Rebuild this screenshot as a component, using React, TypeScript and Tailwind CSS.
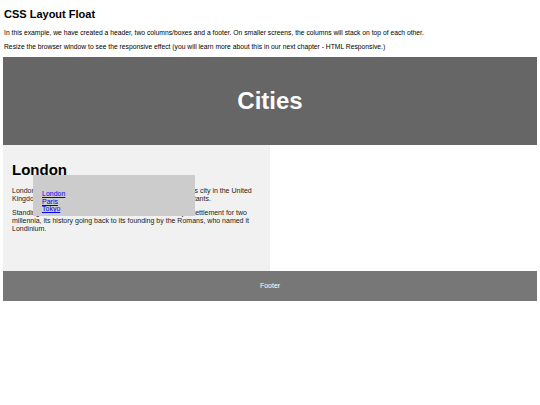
import React from 'react';

const cities = ['London', 'Paris', 'Tokyo'];

const App: React.FC = () => {
  return (
    <div className="min-h-[405px] bg-white px-[3px] font-['Liberation_Sans',Arial,sans-serif] text-black">
      <h2 className="pl-[1px] pt-[7px] text-[11px] leading-[14px] font-bold">CSS Layout Float</h2>
      <p className="mt-[7px] pl-[1px] text-[6.75px] leading-[9px]">
        In this example, we have created a header, two columns/boxes and a footer. On smaller screens, the columns will stack on top of each other.
      </p>
      <p className="mt-[5px] pl-[1px] text-[6.75px] leading-[9px]">
        Resize the browser window to see the responsive effect (you will learn more about this in our next chapter - HTML Responsive.)
      </p>

      <header className="mt-[6px] flex h-[88px] items-center justify-center bg-[#666666]">
        <h2 className="text-[24px] font-bold text-white">Cities</h2>
      </header>

      <section className="flex">
        <article className="relative h-[126px] w-[267px] bg-[#f1f1f1] px-[9px] pt-[16px]">
          <h1 className="text-[15px] leading-[18px] font-bold">London</h1>
          <p className="mt-[8px] text-[7px] leading-[8px] text-[#222]">
            London is the capital city of England. It is the most populous city in the United Kingdom, with a metropolitan area of over 13 million inhabitants.
          </p>
          <p className="mt-[6px] text-[7px] leading-[8px] text-[#222]">
            Standing on the River Thames, London has been a major settlement for two millennia, its history going back to its founding by the Romans, who named it Londinium.
          </p>

          <nav className="absolute left-[30px] top-[30px] h-[41px] w-[162px] bg-[#cccccc] pl-[9px] pt-[15px]">
            <ul className="text-[7px] leading-[7.5px]">
              {cities.map((c) => (
                <li key={c}>
                  <a href="#" className="text-[#0000ee] underline">
                    {c}
                  </a>
                </li>
              ))}
            </ul>
          </nav>
        </article>
      </section>

      <footer className="flex h-[30px] items-center justify-center bg-[#777777] text-[7px] text-white">
        Footer
      </footer>
    </div>
  );
};

export default App;
